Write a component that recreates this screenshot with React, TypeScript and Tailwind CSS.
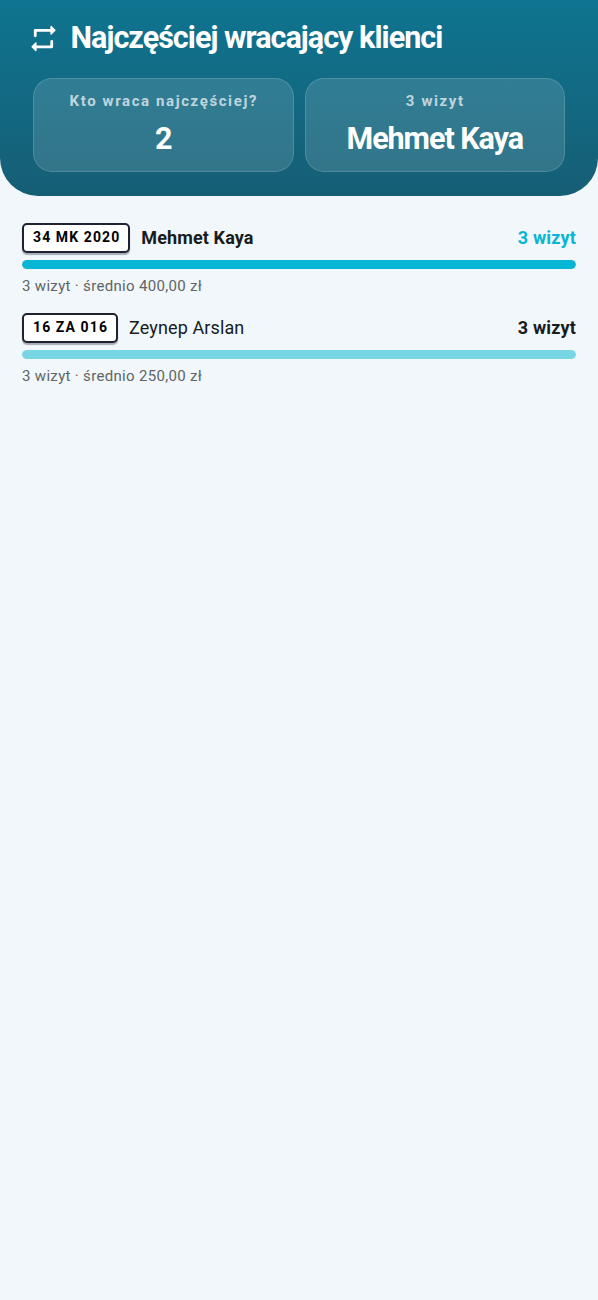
const stats = [
  { label: "Kto wraca najczęściej?", value: "2" },
  { label: "3 wizyt", value: "Mehmet Kaya" },
];

const clients = [
  { plate: "34 MK 2020", name: "Mehmet Kaya", visits: 3, average: "400,00 zł" },
  { plate: "16 ZA 016", name: "Zeynep Arslan", visits: 3, average: "250,00 zł" },
];

const maxVisits = Math.max(...clients.map((c) => c.visits));

function RepeatIcon() {
  return (
    <svg viewBox="0 0 24 24" fill="currentColor" className="size-[33px] shrink-0">
      <path d="M7 7h10v1.79c0 .45.54.67.85.35l2.79-2.79c.2-.2.2-.51 0-.71l-2.79-2.79c-.31-.31-.85-.09-.85.36V5H6c-.55 0-1 .45-1 1v4c0 .55.45 1 1 1s1-.45 1-1V7zm10 10H7v-1.79c0-.45-.54-.67-.85-.35l-2.79 2.79c-.2.2-.2.51 0 .71l2.79 2.79c.31.31.85.09.85-.36V19h11c.55 0 1-.45 1-1v-4c0-.55-.45-1-1-1s-1 .45-1 1v3z" />
    </svg>
  );
}

export default function App() {
  return (
    <div className="min-h-screen bg-[#f1f7fa] font-['Roboto',sans-serif] text-[#171c1f]">
      <header className="h-[196px] rounded-b-[38px] bg-linear-to-b from-[#0e7490] to-[#155e75] px-[33px] pt-[17px] text-white">
        <div className="-ml-[6px] flex h-[42px] items-center gap-[10.5px]">
          <RepeatIcon />
          <h1 className="text-[30.5px] leading-10 font-bold tracking-[-0.96px]">Najczęściej wracający klienci</h1>
        </div>
        <div className="mt-[19px] grid grid-cols-2 gap-[11px]">
          {stats.map((s) => (
            <div key={s.label} className="h-[94px] rounded-[19px] border border-white/15 bg-white/13 pt-3 text-center">
              <p className="pl-px text-[15px] leading-5 font-bold tracking-[1.6px] text-white/70">{s.label}</p>
              <p className="mt-2 text-[30.5px] leading-10 font-bold tracking-[-1.05px]">{s.value}</p>
            </div>
          ))}
        </div>
      </header>

      <main className="flex flex-col gap-4 px-[22px] pt-[27px]">
        {clients.map((c, i) => (
          <div key={c.plate} className="h-[74px]">
            <div className="flex h-[30px] items-center">
              <span className="h-[30px] rounded-[5px] border-2 border-[#1f2233] bg-white pr-2 pl-[9px] text-[14px] leading-[25px] font-bold tracking-[1.1px] text-black shadow-[0_2px_1px_rgba(30,30,50,0.35)]">
                {c.plate}
              </span>
              <span className={`ml-[11px] flex-1 text-[18px] leading-[26px] tracking-[0.12px] ${i === 0 ? "font-bold" : "font-normal"}`}>
                {c.name}
              </span>
              <span className={`text-[18px] leading-[26px] font-bold tracking-[0.15px] ${i === 0 ? "text-[#06b6d4]" : ""}`}>
                {c.visits} wizyt
              </span>
            </div>
            <div className="mt-[7px] h-[9px] overflow-hidden rounded-full bg-[#dfeaef]">
              <div
                className={`h-full rounded-full ${i === 0 ? "bg-[#06b6d4]" : "bg-[#78d5e4]"}`}
                style={{ width: `${(c.visits / maxVisits) * 100}%` }}
              />
            </div>
            <p className="mt-[7px] text-[15px] leading-5 tracking-[0.32px] text-[#5f6468]">
              {c.visits} wizyt · średnio {c.average}
            </p>
          </div>
        ))}
      </main>
    </div>
  );
}
